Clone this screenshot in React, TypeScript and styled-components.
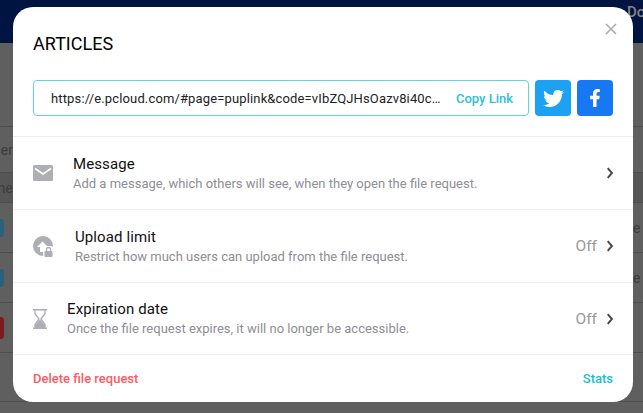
import React from "react";
import styled, { createGlobalStyle } from "styled-components";
import { FaFacebookF, FaTwitter } from "react-icons/fa";

const GlobalStyle = createGlobalStyle`
    html, body {
        margin: 0;
        height: 100%;
        overflow: hidden;
        background: #5f5f5f;
        font-family: Roboto, "Liberation Sans", sans-serif;
    }
`;

const Page = styled.div`
    position: relative;
    width: 643px;
    height: 413px;
    overflow: hidden;
    background: #5f5f5f;
`;

const TopBar = styled.div`
    height: 43px;
    background: #001442;
    color: #8a8580;
    font-size: 15px;
    font-weight: 500;
    padding: 3px 0 0 627px;
    box-sizing: border-box;
    white-space: nowrap;
`;

const TableRow = styled.div<{ $height: number; $dark?: boolean }>`
    height: ${props => props.$height}px;
    box-sizing: border-box;
    border-bottom: 1px solid #4e4e4e;
    background: ${props => (props.$dark ? "#565656" : "transparent")};
    display: flex;
    justify-content: space-between;
    align-items: center;
    color: #3c3c3c;
    font-size: 14px;
    filter: blur(0.4px);
`;

const LeftCell = styled.div`
    width: 13px;
    display: flex;
    justify-content: flex-end;
    white-space: nowrap;
`;

const RightCell = styled.div`
    width: 10px;
    overflow: hidden;
    white-space: nowrap;
`;

const Tag = styled.div<{ $color: string; $height: number }>`
    width: 4px;
    flex: none;
    height: ${props => props.$height}px;
    border-radius: 0 3px 3px 0;
    background: ${props => props.$color};
`;

const Overlay = styled.div`
    position: absolute;
    inset: 0;
    display: flex;
    justify-content: center;
    align-items: flex-start;
    padding-top: 7px;
    padding-left: 3px;
    box-sizing: border-box;
`;

const Modal = styled.div`
    position: relative;
    width: 620px;
    height: 395px;
    background: #fff;
    border-radius: 20px;
    display: flex;
    flex-direction: column;
`;

const CloseButton = styled.button`
    position: absolute;
    top: 16px;
    right: 16px;
    width: 12px;
    height: 12px;
    padding: 0;
    border: 0;
    background: none;
    color: #a9a9ae;
    display: flex;
`;

const Head = styled.div`
    height: 130px;
    padding: 0 20px;
    box-sizing: border-box;
    border-bottom: 1px solid #eeeeef;
`;

const Title = styled.div`
    padding-top: 26px;
    height: 73px;
    box-sizing: border-box;
    font-size: 18px;
    line-height: 21px;
    color: #000;
`;

const LinkBar = styled.div`
    display: flex;
    gap: 6px;
`;

const LinkBox = styled.div`
    width: 496px;
    height: 36px;
    box-sizing: border-box;
    border: 1px solid #5fd3e2;
    border-radius: 4px;
    padding: 0 15px 0 17px;
    display: flex;
    align-items: center;
    gap: 15px;
`;

const LinkText = styled.div`
    flex: 1;
    min-width: 0;
    font-size: 13px;
    letter-spacing: 0.14px;
    color: #222;
    white-space: nowrap;
    overflow: hidden;
    text-overflow: ellipsis;
`;

const CopyLink = styled.div`
    font-size: 13px;
    font-weight: 500;
    color: #2fc0d6;
    white-space: nowrap;
`;

const ShareButton = styled.div<{ $color: string }>`
    width: 36px;
    height: 36px;
    border-radius: 4px;
    background: ${props => props.$color};
    color: #fff;
    display: flex;
    align-items: center;
    justify-content: center;
`;

const Option = styled.div<{ $height: number }>`
    height: ${props => props.$height}px;
    box-sizing: border-box;
    padding: 0 20px;
    border-bottom: 1px solid #eeeeef;
    display: flex;
    align-items: center;
    gap: 20px;
`;

const OptionIcon = styled.div<{ $width: number }>`
    width: ${props => props.$width}px;
    flex: none;
    display: flex;
    color: #aeaeb5;
`;

const OptionBody = styled.div`
    flex: 1;
    min-width: 0;
`;

const OptionTitle = styled.div`
    font-size: 15px;
    line-height: 18px;
    letter-spacing: 0.1px;
    color: #111;
`;

const OptionHint = styled.div`
    font-size: 13px;
    line-height: 16px;
    margin-top: 3px;
    color: #8e8e95;
`;

const OptionValue = styled.div`
    display: flex;
    align-items: center;
    gap: 10px;
    font-size: 15.5px;
    color: #999;
`;

const Footer = styled.div`
    flex: 1;
    padding: 0 20px;
    display: flex;
    justify-content: space-between;
    align-items: center;
    font-size: 13px;
    font-weight: 500;
`;

const DeleteLink = styled.div`
    color: #ff5a5f;
`;

const StatsLink = styled.div`
    color: #17bed0;
`;

const Chevron = () => (
    <svg width="6" height="12" viewBox="0 0 6 12" fill="none" stroke="#444" strokeWidth="1.900">
        <path d="M.7 1.200 5 6 .7 10.800" />
    </svg>
);

const MailIcon = () => (
    <svg width="20" height="16" viewBox="0 0 20 16">
        <path fill="currentColor" d="M1.500 0h17A1.500 1.500 0 0 1 20 1.500v13a1.500 1.500 0 0 1-1.500 1.500h-17A1.500 1.500 0 0 1 0 14.500v-13A1.500 1.500 0 0 1 1.500 0Z" />
        <path fill="none" stroke="#fff" strokeWidth="1.600" d="M2 3.500 10 9l8-5.500" />
    </svg>
);

const UploadLockIcon = () => (
    <svg width="20" height="21" viewBox="0 0 20 21">
        <circle cx="10" cy="10" r="10" fill="currentColor" />
        <path fill="#fff" d="M9.500 5.500 15 11h-3v5H7v-5H4Z" />
        <rect x="10" y="10" width="10" height="11" rx="2" fill="#fff" />
        <rect x="11.500" y="15" width="8" height="6" rx="1" fill="currentColor" />
        <path fill="none" stroke="currentColor" strokeWidth="1.300" d="M13.500 15.500v-2a2 2 0 0 1 4 0v2" />
    </svg>
);

const HourglassIcon = () => (
    <svg width="14" height="20" viewBox="0 0 14 20">
        <path fill="currentColor" d="M0 0h14v1.500H0ZM0 18.500h14V20H0Z" />
        <path fill="none" stroke="currentColor" strokeWidth="1.300" d="M2 1v3.500L6 10l-4 5.500V19M12 1v3.500L8 10l4 5.500V19" />
        <path fill="currentColor" d="M7 10.500 12 16v3H2v-3Z" />
    </svg>
);

const CloseIcon = () => (
    <svg width="12" height="12" viewBox="0 0 12 12" stroke="currentColor" strokeWidth="1.500">
        <path d="M1 1l10 10M11 1 1 11" />
    </svg>
);

export default function App() {
    return (
        <Page>
            <GlobalStyle />
            <TopBar>Do</TopBar>
            <TableRow $height={84} />
            <TableRow $height={46}>
                <LeftCell>Folder</LeftCell>
            </TableRow>
            <TableRow $height={30} $dark>
                <LeftCell>Name</LeftCell>
            </TableRow>
            <TableRow $height={50}>
                <Tag $color="#28627e" $height={18} />
                <RightCell>e</RightCell>
            </TableRow>
            <TableRow $height={50}>
                <Tag $color="#28627e" $height={18} />
                <RightCell>e</RightCell>
            </TableRow>
            <TableRow $height={50}>
                <Tag $color="#7d1a20" $height={22} />
            </TableRow>
            <TableRow $height={49} />
            <Overlay>
                <Modal>
                    <CloseButton><CloseIcon /></CloseButton>
                    <Head>
                        <Title>ARTICLES</Title>
                        <LinkBar>
                            <LinkBox>
                                <LinkText>https://e.pcloud.com/#page=puplink&code=vIbZQJHsOazv8i40cZ7kXp</LinkText>
                                <CopyLink>Copy Link</CopyLink>
                            </LinkBox>
                            <ShareButton $color="#1da1f2"><FaTwitter size={21} /></ShareButton>
                            <ShareButton $color="#1877f2"><FaFacebookF size={18} /></ShareButton>
                        </LinkBar>
                    </Head>
                    <Option $height={73}>
                        <OptionIcon $width={20}><MailIcon /></OptionIcon>
                        <OptionBody>
                            <OptionTitle>Message</OptionTitle>
                            <OptionHint>Add a message, which others will see, when they open the file request.</OptionHint>
                        </OptionBody>
                        <OptionValue><Chevron /></OptionValue>
                    </Option>
                    <Option $height={73}>
                        <OptionIcon $width={22}><UploadLockIcon /></OptionIcon>
                        <OptionBody>
                            <OptionTitle>Upload limit</OptionTitle>
                            <OptionHint>Restrict how much users can upload from the file request.</OptionHint>
                        </OptionBody>
                        <OptionValue>Off <Chevron /></OptionValue>
                    </Option>
                    <Option $height={72}>
                        <OptionIcon $width={14}><HourglassIcon /></OptionIcon>
                        <OptionBody>
                            <OptionTitle>Expiration date</OptionTitle>
                            <OptionHint>Once the file request expires, it will no longer be accessible.</OptionHint>
                        </OptionBody>
                        <OptionValue>Off <Chevron /></OptionValue>
                    </Option>
                    <Footer>
                        <DeleteLink>Delete file request</DeleteLink>
                        <StatsLink>Stats</StatsLink>
                    </Footer>
                </Modal>
            </Overlay>
        </Page>
    );
}
